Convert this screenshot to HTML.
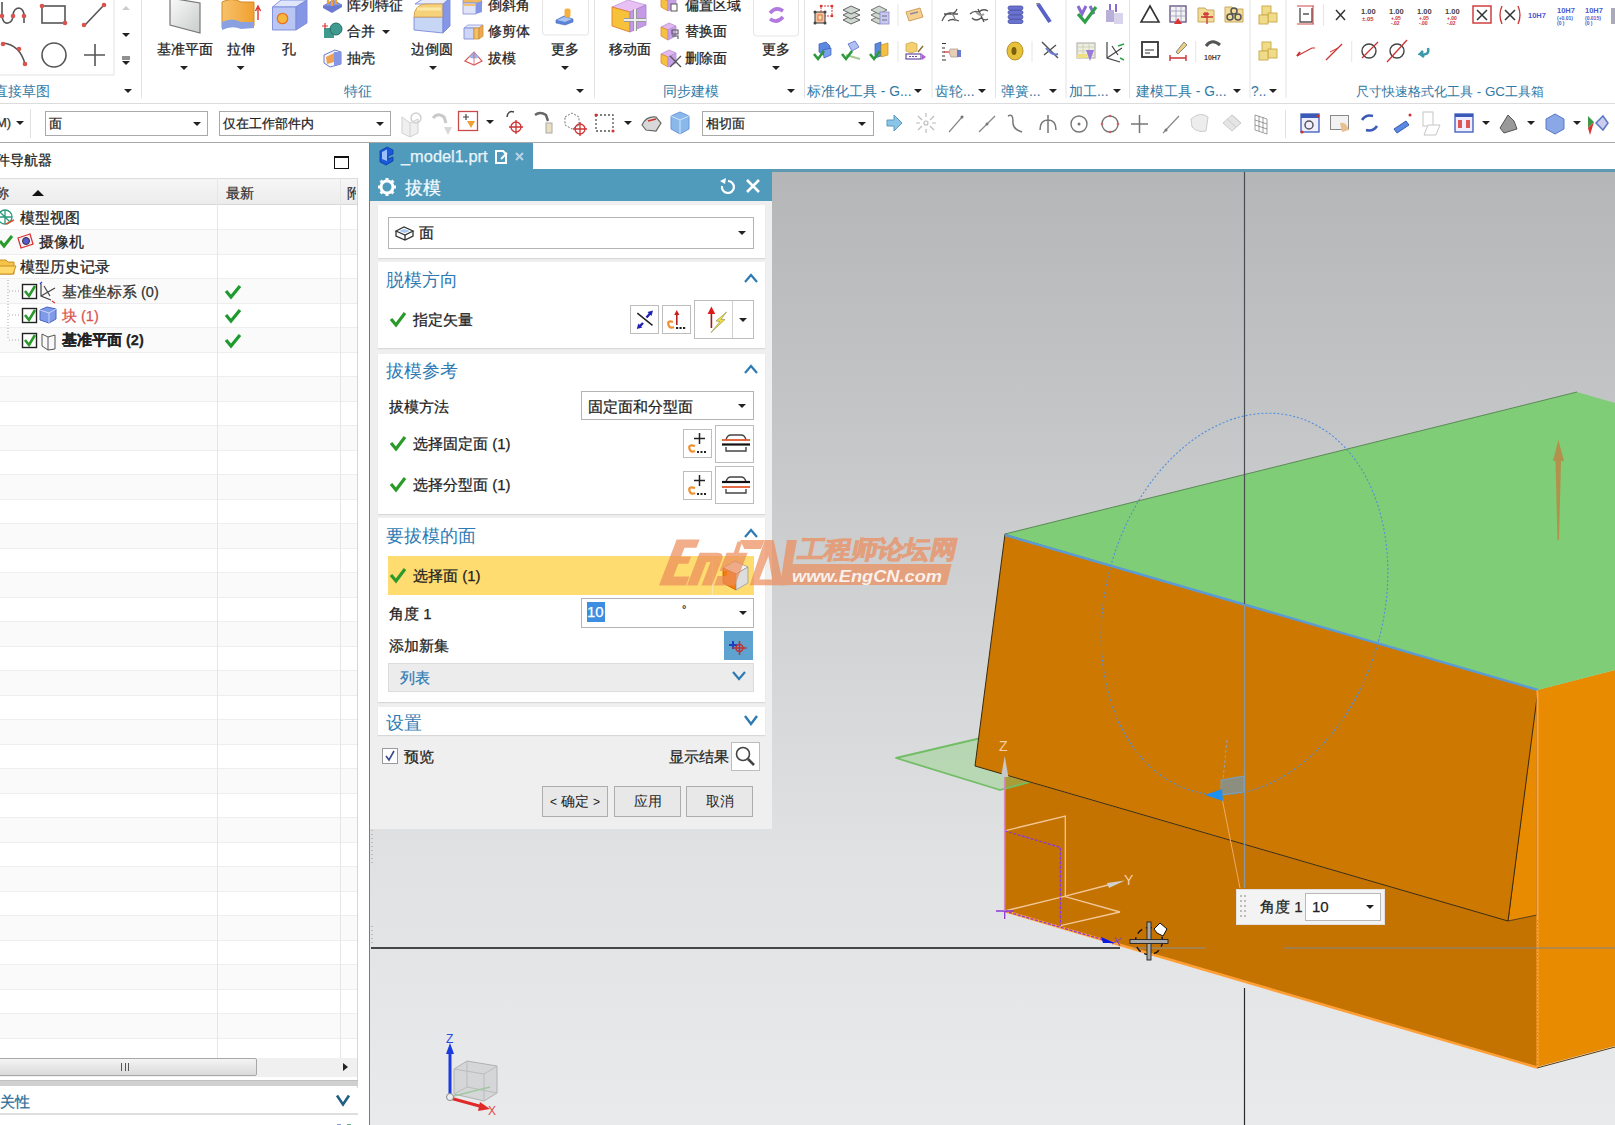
<!DOCTYPE html>
<html><head><meta charset="utf-8">
<style>
*{box-sizing:border-box}
html,body{margin:0;padding:0}
body{width:1615px;height:1125px;overflow:hidden;position:relative;background:#fff;font-family:"Liberation Sans",sans-serif;color:#222;font-size:13px}
.a{position:absolute}
.t{position:absolute;white-space:nowrap;line-height:1;-webkit-text-stroke:0.25px currentColor}
.lbl{position:absolute;white-space:nowrap;line-height:1;color:#2f79a6;font-size:13.8px}
.vsep{position:absolute;width:1px;background:#e3e3e3}
.dd{position:absolute;background:#fff;border:1px solid #a9a9a9}
.tri{position:absolute;width:0;height:0;border-left:4px solid transparent;border-right:4px solid transparent;border-top:4px solid #222}
.sec{position:absolute;left:378px;width:387px;background:#fff;box-shadow:0 1px 1px #d8d8d8}
.sh{position:absolute;left:9px;color:#2e7bb4;font-size:18px;line-height:1;white-space:nowrap}
.chev{position:absolute}
.btn{position:absolute;background:#e8e8e8;border:1px solid #adadad;font-size:14px;line-height:28px;text-align:center;color:#222}
.nrow{position:absolute;left:0;width:357px;height:25px;border-bottom:1px solid #ececec}
.ck{position:absolute}
</style></head>
<body>

<!-- ================= VIEWPORT ================= -->
<svg class="a" style="left:0;top:0" width="1615" height="1125" viewBox="0 0 1615 1125">
  <defs>
    <linearGradient id="vg" x1="0" y1="0" x2="0" y2="1">
      <stop offset="0" stop-color="#b4b6b8"/>
      <stop offset="0.24" stop-color="#c3c4c5"/>
      <stop offset="0.46" stop-color="#d0d2d3"/>
      <stop offset="0.71" stop-color="#e0e1e2"/>
      <stop offset="0.93" stop-color="#e7e8ea"/>
      <stop offset="1" stop-color="#e9eaec"/>
    </linearGradient>
  </defs>
  <rect x="370" y="172" width="1245" height="953" fill="url(#vg)"/>
  <!-- datum plane -->
  <!-- lower front face -->
  <polygon points="1004.5,775 1508,921 1537,915 1537,1067 1004.5,910.5" fill="#c47200"/>
  <polygon points="896,758 981,738 1030,782 1000,790" fill="#8fd080" fill-opacity="0.45" stroke="#72bd66" stroke-width="1.8" stroke-linejoin="round"/>
  <!-- right face -->
  <polygon points="1537,690 1615,670 1615,1046 1537,1067" fill="#e88b00"/>
  <polygon points="1537,690 1508,921 1537,915" fill="#e88b00" stroke="#3a2a10" stroke-width="0.8"/>
  <!-- drafted face -->
  <polygon points="1005,534 1538,690 1508,921 975,766" fill="#cd7800" stroke="#3a2a10" stroke-width="1"/>
  <!-- green top -->
  <polygon points="1005,534 1577,392 1615,403 1615,670 1538,690" fill="#7fcd76"/>
  <line x1="1005" y1="534" x2="1577" y2="392" stroke="#5a8a55" stroke-width="1"/>
  <line x1="1005" y1="535" x2="1538" y2="690" stroke="#5b9bd5" stroke-width="2.5"/>
  <line x1="1537.5" y1="690" x2="1537.5" y2="1067" stroke="#ffa53e" stroke-width="2"/><line x1="1537.5" y1="920" x2="1537.5" y2="1067" stroke="#c87a20" stroke-width="0.8" stroke-dasharray="1.5,2"/>
  <line x1="1004.5" y1="911" x2="1537" y2="1067.5" stroke="#ff9f35" stroke-width="2.6"/>
  <line x1="1537" y1="1068" x2="1615" y2="1047" stroke="#5a3a10" stroke-width="1"/>
  <!-- horizontal line -->
  <line x1="371" y1="948" x2="1120" y2="948" stroke="#111" stroke-width="1.6"/>
  <line x1="1134" y1="948" x2="1206" y2="948" stroke="#8a8f95" stroke-width="1.2"/>
  <line x1="1283" y1="948" x2="1615" y2="948" stroke="#7f858c" stroke-width="1.2"/>
  <!-- vertical line -->
  <line x1="1244.5" y1="172" x2="1244.5" y2="604" stroke="#4a4d50" stroke-width="1.2"/><line x1="1244.5" y1="604" x2="1244.5" y2="888" stroke="#8a96a0" stroke-width="1.3"/>
  <line x1="1244.5" y1="988" x2="1244.5" y2="1125" stroke="#2a2a2a" stroke-width="1.2"/>
  <!-- dotted ellipse -->
  <ellipse cx="1244.5" cy="604" rx="139" ry="194" transform="rotate(15 1244.5 604)" fill="none" stroke="#4f8fe0" stroke-width="1.1" stroke-dasharray="2,2"/>
  <!-- top face arrow -->
  <path d="M1558.3,440 L1553,461 L1555.5,461 L1557.5,540 L1559,540 L1561,461 L1564,461 Z" fill="#b1914c"/>
  <!-- handle on ellipse bottom -->
  <path d="M1227,740 L1222,790" stroke="#9aa0b0" stroke-width="1" stroke-dasharray="3,2"/>
  <path d="M1222,798 L1240,888" stroke="#f0b070" stroke-width="0.9"/>
  <path d="M1221,780 L1244,776 L1244,792 L1221,795 Z" fill="#8c8f80" stroke="#6aa8e0" stroke-width="0.8"/>
  <path d="M1205,795 L1222,789 L1223,801 Z" fill="#1e90f0"/>
  <!-- WCS -->
  <g fill="none" stroke="#f2c898" stroke-width="1.3">
    <path d="M1004.7,911 L1064.4,896.3 L1120,912 L1060.4,925.7"/>
    <path d="M1004.7,830.8 L1065.3,816 L1065.3,896.3"/>
    <path d="M1064.4,896.3 L1108,885"/>
  </g>
  <g fill="none" stroke="#8a3ad8" stroke-width="1.3">
    <path d="M1004.7,830.8 L1060.4,847.4 L1060.4,925.7" stroke-dasharray="3,1.5"/>
    <path d="M1004.7,911 L1104,940" stroke-dasharray="3,1.5"/>
    <path d="M996,911 H1014 M1004.7,903 V919"/>
  </g>
  <path d="M1004.7,911 V778" stroke="#d88ac0" stroke-width="1.6"/>
  <path d="M1004.7,756 L1001,777 L1008.4,777 Z" fill="#c8c8c8"/>
  <path d="M1125,880.5 L1107,883 L1109,888 Z" fill="#d0d0d0"/>
  <path d="M1101,937 L1115,943 L1103,943 Z" fill="#0a18e0"/>
  <g font-family="Liberation Sans" font-size="14" fill="#f5d0a8"><text x="999" y="751">Z</text><text x="1124" y="885">Y</text></g>
  <path d="M1112,944 L1122,938 M1115,937 L1120,946" stroke="#7a40d0" stroke-width="1"/>
  <!-- cursor -->
  <circle cx="1149" cy="941" r="13.5" fill="none" stroke="#111" stroke-width="1.4" stroke-dasharray="6,4"/>
  <rect x="1147" y="922" width="4" height="38" fill="#a8a8a8" stroke="#222" stroke-width="0.9"/>
  <rect x="1130" y="939.5" width="38" height="4" fill="#a8a8a8" stroke="#222" stroke-width="0.9"/>
  <path d="M1154,929 L1160,923 L1167,929 L1163,936 L1157,933 Z" fill="#fff" stroke="#111" stroke-width="1"/>
  <!-- bottom-left triad -->
  <path d="M454,1069 L467,1061 L497,1066 L497,1093 L484,1101 L454,1094 Z" fill="#c8caca" fill-opacity="0.6" stroke="#b0b2b2" stroke-width="1"/>
  <path d="M454,1069 L484,1074 L497,1066 M484,1074 V1101 M467,1061 V1087 L454,1094 M467,1087 L497,1093" fill="none" stroke="#b8baba" stroke-width="0.9"/>
  <path d="M450,1097 V1049" stroke="#1a3ae0" stroke-width="3"/><path d="M450,1043 L446,1054 L454,1054 Z" fill="#1a3ae0"/>
  <path d="M450,1098 L483,1107" stroke="#e02a2a" stroke-width="3"/><path d="M490,1109 L480,1102 L478,1111 Z" fill="#e02a2a"/>
  <path d="M450,1097 L490,1087" stroke="#a0c8a0" stroke-width="1.5"/>
  <circle cx="450" cy="1097" r="3.5" fill="#eee" stroke="#888"/>
  <g font-family="Liberation Sans" font-size="12"><text x="446" y="1043" fill="#2a4ae0">Z</text><text x="488" y="1115" fill="#e04a4a">X</text></g>
  <!-- viewport left edge handle -->
  <path d="M372,826 V866 M372,926 V946" stroke="#999" stroke-dasharray="1,3"/>

</svg>

<!-- ================= RIBBON ================= -->
<!-- group 1 直接草图 -->
<svg class="a" style="left:0;top:0" width="141" height="100">
  <g fill="none" stroke="#555" stroke-width="1.6">
    <path d="M2,2 V16 Q3,24 8,23 Q13,22 13,15 Q14,8 19,8 Q24,9 24,16 V23"/>
    <rect x="42" y="6" width="23" height="17"/>
    <line x1="85" y1="25" x2="104" y2="5"/>
    <path d="M3,43 Q20,45 25,64"/>
    <circle cx="54" cy="55" r="12"/>
    <path d="M84,55 H105 M95,44 V66"/>
  </g>
  <g fill="#d9534f">
    <circle cx="2" cy="16" r="2.3"/><circle cx="13" cy="16" r="2.3"/><circle cx="24" cy="16" r="2.3"/>
    <circle cx="42" cy="6" r="2.3"/><circle cx="65" cy="23" r="2.3"/>
    <circle cx="104" cy="5" r="2.3"/><circle cx="84" cy="25" r="2.3"/>
    <circle cx="3" cy="44" r="2.3"/><circle cx="19" cy="49" r="2.3"/><circle cx="25" cy="64" r="2.3"/>
  </g>
  <path d="M0,75 H114 V0" fill="none" stroke="#e2e2e2" stroke-width="1"/>
  <path d="M122,10 L126,6 L130,10 Z" fill="#ccc"/>
  <path d="M122,33 L130,33 L126,37 Z" fill="#222"/>
  <path d="M122,57 H130 M122,59 H130" stroke="#222" stroke-width="1"/>
  <path d="M122,61 L130,61 L126,65 Z" fill="#222"/>
  <path d="M124,89 L132,89 L128,93 Z" fill="#222"/>
</svg>
<div class="lbl" style="left:-6px;top:85px">直接草图</div>
<div class="vsep" style="left:141px;top:0;height:98px"></div>

<!-- group 2 特征 -->
<svg class="a" style="left:141px;top:0" width="453" height="100">
  <!-- datum plane -->
  <defs>
    <linearGradient id="gp" x1="0" y1="0" x2="1" y2="1"><stop offset="0" stop-color="#fafafa"/><stop offset="1" stop-color="#c9cccc"/></linearGradient>
    <linearGradient id="go" x1="0" y1="0" x2="1" y2="0"><stop offset="0" stop-color="#f7c26a"/><stop offset="1" stop-color="#f0a030"/></linearGradient>
    <linearGradient id="gb" x1="0" y1="0" x2="1" y2="1"><stop offset="0" stop-color="#c8d4f8"/><stop offset="1" stop-color="#7f95e6"/></linearGradient>
  </defs>
  <path d="M29,-2 L59,3 L59,33 L29,25 Z" fill="url(#gp)" stroke="#777" stroke-width="1.2"/>
  <!-- extrude -->
  <path d="M81,2 Q91,-3 100,2 L113,2 L113,26 L100,26 Q91,22 81,28 Z" fill="url(#go)" stroke="#d08a2a" stroke-width="1"/>
  <path d="M81,22 Q91,17 100,22 L113,22 L113,28 L100,29 Q91,25 81,30 Z" fill="#8aa0e0"/>
  <path d="M117,20 V8 M114.5,11 L117,6 L119.5,11" stroke="#d33" stroke-width="1.4" fill="none"/>
  <!-- hole -->
  <path d="M131.5,7 L140,0 L166,0 L155,7 Z" fill="#dfe6fb" stroke="#7a8ad8" stroke-width="0.9"/>
  <path d="M131.5,7 H155 V30 H131.5 Z" fill="#b9c6f4" stroke="#7a8ad8" stroke-width="0.9"/>
  <path d="M155,7 L166,0 V23 L155,30 Z" fill="#8596e6" stroke="#7a8ad8" stroke-width="0.9"/>
  <circle cx="141.5" cy="18.5" r="5.2" fill="#f6b83c" stroke="#e8702a" stroke-width="1.3"/>
  <!-- small icons -->
  <path d="M182,6 L192,0 L201,5 L191,11 Z" fill="#8596e6" stroke="#6a7ad0" stroke-width="0.8"/><path d="M182,6 V8 L191,13 L201,7 V5" fill="#6a7ad0"/><path d="M187,4 V-3 M191,6 V-2 M195,4 V-4" stroke="#f0a030" stroke-width="2.2"/>
  <rect x="183" y="28" width="10" height="10" fill="#3e9a8e"/><circle cx="195" cy="29" r="6" fill="#3e9a8e" stroke="#2a6b63"/><path d="M181,26 H187 M184,23 V29" stroke="#d33" stroke-width="1.2"/>
  <path d="M183,55 L194,50 L200,52 L200,64 L189,67 L183,63 Z" fill="#f6f6fa" stroke="#6a7ad0" stroke-width="1"/><path d="M185,57 L193,53 L193,62 L186,64 Z" fill="#f0a050"/><path d="M193,52 L200,52 V64 L193,66 Z" fill="#8596e6"/>
  <path d="M95.6,66 L103.6,66 L99.6,70 Z M39,66 L47,66 L43,70 Z" fill="#222"/>
  <path d="M241,30 L249,30 L245,34 Z" fill="#222"/>
  <!-- edge blend -->
  <path d="M274,4 L283,-2 L309,-2 L303,4 Z" fill="#e8ecfa" stroke="#7a8ad8" stroke-width="0.9"/>
  <path d="M273,17 V30 L302,33 V17 Z" fill="#c8d6f6" stroke="#7a8ad8" stroke-width="0.9"/>
  <path d="M273,17 Q273,4 286,4 H302 Q302,13 302,17 Z" fill="#f5d27a" stroke="#d8a050" stroke-width="0.9"/>
  <path d="M276,9 H300" stroke="#fbe9a8" stroke-width="3"/>
  <path d="M302,4 L309,-2 V26 L302,33 Z" fill="#8596e6" stroke="#7a8ad8" stroke-width="0.9"/>
  <path d="M288,66 L296,66 L292,70 Z" fill="#222"/>
  <!-- small icons 2 -->
  <path d="M322,-2 L340,-2 L341,3 L322,3 Z" fill="#f0b860" stroke="#8a96d8" stroke-width="0.8"/><path d="M322,3 H335 V14 H322 Z" fill="#dfe4f8" stroke="#8a96d8" stroke-width="0.9"/><path d="M335,3 L341,1 V12 L335,14 Z" fill="#8596e6"/><path d="M323,5 H334" stroke="#f0c070" stroke-width="2"/>
  <path d="M323,28 L327,25 H342 L338,28 Z" fill="#e8ecfa" stroke="#8a96d8" stroke-width="0.8"/><path d="M323,28 H333 V39 H323 Z" fill="#cdd6f6" stroke="#8a96d8" stroke-width="1"/><path d="M333,28 H338 V39 H333 Z" fill="#f5c060" stroke="#c89040" stroke-width="0.8"/><path d="M338,28 L342,25 V36 L338,39 Z" fill="#f0a850" stroke="#c89040" stroke-width="0.8"/>
  <path d="M324,61 L333,52 L341,61 L333,65 Z" fill="#fff" stroke="#d85a5a" stroke-width="1.2"/><path d="M328,57 L333,52 L338,57 Q333,60 328,57 Z" fill="#9ab4ee"/><path d="M333,53 V64" stroke="#d85a5a" stroke-width="0.8"/>
  <!-- more box -->
  <rect x="401.5" y="-2" width="46" height="37" rx="3" fill="#fff" stroke="#e5e5e5"/>
  <path d="M415,20 L423,16 L432,19 L432,22 L424,25 L415,23 Z" fill="#5a84d8" stroke="#4a6ac0" stroke-width="0.6"/><path d="M416,20 L423,17 L431,19 L424,22 Z" fill="#a8c4f0"/><rect x="423.5" y="8.5" width="6" height="9" rx="2" fill="#f5b040"/>
  <path d="M420,66 L428,66 L424,70 Z" fill="#222"/>
  <path d="M435,89 L443,89 L439,93 Z" fill="#222"/>
</svg>
<div class="t" style="left:157px;top:42px;font-size:14px">基准平面</div>
<div class="t" style="left:227px;top:42px;font-size:14px">拉伸</div>
<div class="t" style="left:282px;top:42px;font-size:14px">孔</div>
<div class="t" style="left:347px;top:-2px;font-size:14px">阵列特征</div>
<div class="t" style="left:347px;top:24px;font-size:14px">合并</div>
<div class="t" style="left:347px;top:51px;font-size:14px">抽壳</div>
<div class="t" style="left:411px;top:42px;font-size:14px">边倒圆</div>
<div class="t" style="left:488px;top:-2px;font-size:14px">倒斜角</div>
<div class="t" style="left:488px;top:24px;font-size:14px">修剪体</div>
<div class="t" style="left:488px;top:51px;font-size:14px">拔模</div>
<div class="t" style="left:551px;top:42px;font-size:14px">更多</div>
<div class="lbl" style="left:344px;top:85px">特征</div>
<div class="vsep" style="left:594px;top:0;height:98px"></div>

<!-- group 3 同步建模 -->
<svg class="a" style="left:594px;top:0" width="210" height="100">
  <path d="M18,7 L34,0 L52,5 L36,12 Z" fill="#e8c0f4" stroke="#c098e0" stroke-width="0.8"/>
  <path d="M18,7 L36,12 V32 L18,26 Z" fill="#f6c23a" stroke="#e0802a" stroke-width="0.9"/>
  <path d="M36,12 L52,5 V25 L36,32 Z" fill="#c49ae6" stroke="#a880d0" stroke-width="0.8"/>
  <path d="M30,20 H52 M41,9 V31" stroke="#999" stroke-width="4"/><path d="M30,20 H52 M41,9 V31" stroke="#eee" stroke-width="2"/>
  <path d="M67,-2 L75,-6 L82,-3 L74,1 Z" fill="#e2b8f0" stroke="#b890d8" stroke-width="0.8"/><path d="M67,-2 L74,1 V11 L67,7 Z" fill="#f6c040" stroke="#e08a30" stroke-width="0.8"/><path d="M74,1 L82,-3 V7 L74,11 Z" fill="#c8a0e8" stroke="#b890d8" stroke-width="0.8"/><rect x="77" y="4" width="6" height="7" fill="#fff" stroke="#555" stroke-width="1"/>
  <path d="M67,27 L75,23 L82,26 L74,30 Z" fill="#e2b8f0" stroke="#b890d8" stroke-width="0.8"/><path d="M67,27 L74,30 V40 L67,36 Z" fill="#f6c040" stroke="#e08a30" stroke-width="0.8"/><path d="M74,30 L82,26 V36 L74,40 Z" fill="#c8a0e8" stroke="#b890d8" stroke-width="0.8"/><path d="M78,30 h6 v4 h-6 z M78,36 h6 v3" fill="none" stroke="#555" stroke-width="1.1"/>
  <path d="M67,54 L75,50 L82,53 L74,57 Z" fill="#e2b8f0" stroke="#b890d8" stroke-width="0.8"/><path d="M67,54 L74,57 V67 L67,63 Z" fill="#f6c040" stroke="#e08a30" stroke-width="0.8"/><path d="M74,57 L82,53 V63 L74,67 Z" fill="#c8a0e8" stroke="#b890d8" stroke-width="0.8"/><path d="M76,56 L87,67 M87,56 L76,67" stroke="#555" stroke-width="1.3"/>
  <rect x="159.5" y="-2" width="45" height="38" rx="3" fill="#fff" stroke="#e5e5e5"/>
  <path d="M176,13 Q182,6 189,11 M189,17 Q183,24 176,19" stroke="#b07ae0" stroke-width="3.5" fill="none"/>
  <path d="M178,66 L186,66 L182,70 Z" fill="#222"/>
  <path d="M193,89 L201,89 L197,93 Z" fill="#222"/>
  <path d="M-10,89 L-2,89 L-6,93 Z" fill="#222"/>
</svg>
<div class="t" style="left:609px;top:42px;font-size:14px">移动面</div>
<div class="t" style="left:685px;top:-2px;font-size:14px">偏置区域</div>
<div class="t" style="left:685px;top:24px;font-size:14px">替换面</div>
<div class="t" style="left:685px;top:51px;font-size:14px">删除面</div>
<div class="t" style="left:762px;top:42px;font-size:14px">更多</div>
<div class="lbl" style="left:663px;top:85px">同步建模</div>
<div class="vsep" style="left:804px;top:0;height:98px"></div>
<!-- groups 4.. -->
<svg class="a" style="left:0;top:0" width="1615" height="100">
  <!-- 标准化工具 -->
  <rect x="821" y="6" width="11" height="10" fill="#fff" stroke="#d33" stroke-width="1" stroke-dasharray="2,1"/><g fill="#d33"><circle cx="821" cy="6" r="1.3"/><circle cx="832" cy="6" r="1.3"/><circle cx="832" cy="16" r="1.3"/></g>
  <rect x="815" y="12" width="10" height="11" fill="#f4c0a0" stroke="#555" stroke-width="1.2"/><rect x="818" y="15" width="4" height="5" fill="#f8e0b0" stroke="#d06030" stroke-width="0.8"/><g fill="#444"><circle cx="815" cy="12" r="1.5"/><circle cx="825" cy="23" r="1.5"/><circle cx="815" cy="23" r="1.5"/><circle cx="825" cy="12" r="1.5"/></g>
  <g fill="#cfd8d0" stroke="#555" stroke-width="0.9"><path d="M843,20 L851,16 L860,20 L851,24 Z"/><path d="M843,15 L851,11 L860,15 L851,19 Z"/><path d="M843,10 L851,6 L860,10 L851,14 Z"/></g>
  <g fill="#cfd8d0" stroke="#666" stroke-width="0.9"><path d="M871,20 L879,16 L887,20 L879,24 Z"/><path d="M871,15 L879,11 L887,15 L879,19 Z"/><path d="M871,10 L879,6 L887,10 L879,14 Z"/></g>
  <rect x="880" y="12" width="9" height="12" fill="#c8c8f0" stroke="#8a8ac8" stroke-width="0.8"/><path d="M882,16 H887 M882,20 H887" stroke="#555" stroke-width="0.8"/>
  <line x1="898" y1="4" x2="898" y2="26" stroke="#e5e5e5"/>
  <path d="M906,12 L920,8 L923,17 L909,21 Z" fill="#f5d090" stroke="#d0a060" stroke-width="1"/><path d="M910,14 L918,12" stroke="#8a8aa0" stroke-width="1.5"/>
  <path d="M819,44 L826,42 L830,46 V52 L823,55 L819,52 Z" fill="#5a8ae0" stroke="#3a5ab0" stroke-width="0.7"/><path d="M823,50 L831,48 V55 L824,58 Z" fill="#7aa0f0" stroke="#3a5ab0" stroke-width="0.7"/>
  <path d="M814,54 L818,59 L824,51" stroke="#2a9a3a" stroke-width="2.6" fill="none"/>
  <path d="M848,44 L855,41 L859,47 L852,51 Z" fill="#b0c0f0" stroke="#5a6ad0" stroke-width="0.8"/><path d="M846,55 L860,59" stroke="#a8c890" stroke-width="2"/>
  <path d="M842,54 L846,59 L852,51" stroke="#2a9a3a" stroke-width="2.6" fill="none"/>
  <path d="M875,44 L881,42 V56 L875,58 Z" fill="#5a8ae0" stroke="#3a5ab0" stroke-width="0.7"/><path d="M881,45 L888,43 V55 L881,57 Z" fill="#f5c040" stroke="#c09020" stroke-width="0.7"/>
  <path d="M870,54 L874,59 L880,51" stroke="#2a9a3a" stroke-width="2.6" fill="none"/>
  <line x1="898" y1="41" x2="898" y2="62" stroke="#e5e5e5"/>
  <path d="M906,44 L912,42 L917,44 V51 L911,53 L906,51 Z" fill="#f5d070" stroke="#c0a040" stroke-width="0.7"/><path d="M918,52 L923,46" stroke="#8a6a30" stroke-width="1.4"/>
  <rect x="906" y="54" width="15" height="5" fill="#fff" stroke="#6a4aa0" stroke-width="1.2"/><path d="M909,56.5 H918" stroke="#6a4aa0" stroke-width="1.2" stroke-dasharray="2,1"/><path d="M922,54 L926,57 L922,60 Z" fill="#b060d0"/>
  <path d="M914,89 L922,89 L918,93 Z" fill="#222"/>
  <line x1="932" y1="0" x2="932" y2="98" stroke="#e3e3e3"/>
  <!-- 齿轮 -->
  <path d="M942,21 Q946,12 951,13 Q955,14 957,9 M944,14 H958 M948,21 Q952,18 959,21" stroke="#555" stroke-width="1.3" fill="none"/><path d="M951,13 Q955,16 955,21" stroke="#888" stroke-width="1.5" fill="none"/>
  <path d="M970,14 Q974,10 979,12 Q983,8 988,11 M972,18 Q976,22 981,18 Q985,21 988,19 M978,9 L984,22" stroke="#555" stroke-width="1.3" fill="none"/><path d="M976,12 Q980,17 984,14" stroke="#999" stroke-width="2" fill="none"/>
  <path d="M942,43.5 H946 M942,48 H945 M942,52 H945 M942,56 H945 M942,60 H946" stroke="#333" stroke-width="1.2"/><path d="M944,52 H950" stroke="#c33" stroke-width="1.2"/><path d="M950,49 H958 V57 H951 Q948,53 950,49 Z" fill="#e8d0b8" stroke="#9a8a7a" stroke-width="0.6"/><rect x="957" y="50" width="4" height="7" fill="#6a7ad0"/>
  <path d="M978,89 L986,89 L982,93 Z" fill="#222"/>
  <line x1="995.5" y1="0" x2="995.5" y2="98" stroke="#e3e3e3"/>
  <!-- 弹簧 -->
  <g fill="#6a72d0" stroke="#4a52a8" stroke-width="0.8"><rect x="1008" y="6" width="15" height="4" rx="2"/><rect x="1008" y="10.5" width="15" height="4" rx="2"/><rect x="1008" y="15" width="15" height="4" rx="2"/><rect x="1008" y="19.5" width="15" height="4" rx="2"/></g>
  <path d="M1038,4 L1050,22" stroke="#5a62c8" stroke-width="4"/><path d="M1036,4 Q1038,2 1040,5" stroke="#777" fill="none"/>
  <ellipse cx="1015" cy="51" rx="8" ry="9" fill="#e6c23a" stroke="#b89020"/><ellipse cx="1014" cy="51" rx="2.5" ry="4" fill="#7a6010"/>
  <line x1="1032" y1="41" x2="1032" y2="62" stroke="#e5e5e5"/>
  <path d="M1042,42 L1058,58 M1044,55 L1056,45" stroke="#555" stroke-width="1.5"/><path d="M1046,48 Q1052,56 1058,54" stroke="#6a7ad0" stroke-width="2" fill="none"/>
  <path d="M1049,89 L1057,89 L1053,93 Z" fill="#222"/>
  <line x1="1066" y1="0" x2="1066" y2="98" stroke="#e3e3e3"/>
  <!-- 加工 -->
  <path d="M1078,6 L1082,14 L1086,6 M1090,6 L1094,14" stroke="#8a6ad0" stroke-width="3" fill="none"/><path d="M1078,14 L1085,22 L1096,7" stroke="#2ea04a" stroke-width="3.2" fill="none"/>
  <rect x="1106" y="10" width="8" height="12" fill="#b8b0d8"/><rect x="1114" y="13" width="9" height="11" fill="#d8d4ec"/><path d="M1110,4 V10 M1116,4 V12" stroke="#8a6ad0" stroke-width="2"/>
  <rect x="1077" y="43" width="18" height="15" fill="#eeeee0" stroke="#aaa"/><path d="M1077,47 H1095 M1077,51 H1095 M1077,55 H1095 M1083,43 V58 M1089,43 V58" stroke="#c8c8b0" stroke-width="0.7"/><rect x="1077" y="54" width="10" height="4" fill="#f0e080"/><path d="M1086,50 L1094,50 L1090,61 Z" fill="#9a7ad8"/>
  <path d="M1107,42 V58 L1120,62 M1107,58 L1122,48 M1112,46 L1118,55" stroke="#444" stroke-width="1.2" fill="none"/><path d="M1118,46 L1124,44 M1120,58 L1124,60" stroke="#2ea04a" stroke-width="1.4"/>
  <path d="M1113,89 L1121,89 L1117,93 Z" fill="#222"/>
  <line x1="1129.5" y1="0" x2="1129.5" y2="98" stroke="#e3e3e3"/>
  <!-- 建模工具 -->
  <path d="M1150,6 L1159,22 L1141,22 Z" fill="none" stroke="#333" stroke-width="1.6"/>
  <rect x="1170" y="6" width="16" height="16" fill="#f3f3f3" stroke="#6a5a8a" stroke-width="1.4"/><path d="M1170,11 H1186 M1170,16 H1186 M1176,6 V22 M1181,6 V22" stroke="#9a9aba" stroke-width="0.8"/><path d="M1178,18 L1182,24 L1174,24 Z" fill="#d33"/>
  <path d="M1198,8 H1205 L1207,10 H1214 V22 H1198 Z" fill="#f2dc98" stroke="#c8a860"/><path d="M1201,17 H1213 M1207,12 V24 M1203,14 H1209 M1205,12 V18" stroke="#c33" stroke-width="1.3"/>
  <path d="M1225,7 H1232 L1234,9 H1243 V22 H1225 Z" fill="#f2dc98" stroke="#c8a860"/><circle cx="1230" cy="17" r="3" fill="none" stroke="#555" stroke-width="1.5"/><circle cx="1238" cy="17" r="3" fill="none" stroke="#555" stroke-width="1.5"/><circle cx="1234" cy="11" r="3" fill="none" stroke="#555" stroke-width="1.5"/>
  <rect x="1142" y="42" width="16" height="15" fill="#fff" stroke="#333" stroke-width="1.8"/><path d="M1145,50 H1154 M1145,53 H1150" stroke="#333"/>
  <path d="M1170,58 H1186 M1170,55 V61 M1186,55 V61" stroke="#c33" stroke-width="1.4"/><path d="M1176,52 L1184,42 L1187,45 L1178,54 Z" fill="#e8d080" stroke="#888"/>
  <line x1="1195.7" y1="41" x2="1195.7" y2="62" stroke="#e5e5e5"/>
  <path d="M1206,46 Q1212,38 1220,45" stroke="#555" stroke-width="3" fill="none"/><text x="1204" y="60" font-size="7" font-weight="bold" fill="#444" font-family="Liberation Sans">10H7</text>
  <path d="M1233,89 L1241,89 L1237,93 Z" fill="#222"/>
  <line x1="1250" y1="0" x2="1250" y2="98" stroke="#e3e3e3"/>
  <!-- ?.. -->
  <g fill="#f0dc88" stroke="#c8a848" stroke-width="0.9"><rect x="1262" y="6" width="9" height="9"/><rect x="1268" y="13" width="9" height="9"/><rect x="1259" y="15" width="9" height="9"/></g>
  <g fill="#f0dc88" stroke="#c8a848" stroke-width="0.9"><rect x="1262" y="42" width="9" height="9"/><rect x="1268" y="49" width="9" height="9"/><rect x="1259" y="51" width="9" height="9"/></g>
  <path d="M1269,89 L1277,89 L1273,93 Z" fill="#222"/>
  <line x1="1286" y1="0" x2="1286" y2="98" stroke="#e3e3e3"/>
  <!-- 尺寸快速格式化 -->
  <path d="M1300,8 V22 H1312 V8 M1303,14 H1309" stroke="#555" stroke-width="1.4" fill="none"/><path d="M1313,6 V24 M1297,6 H1314 M1297,24 H1314" stroke="#c33" stroke-width="0.9"/>
  <line x1="1323.4" y1="4" x2="1323.4" y2="26" stroke="#e5e5e5"/>
  <path d="M1336,10 L1345,20 M1345,10 L1336,20" stroke="#333" stroke-width="1.5"/>
  <g font-family="Liberation Sans" font-size="7.5" font-weight="bold" fill="#444">
    <text x="1361" y="14">1.00</text><text x="1362" y="21" font-size="6" fill="#c33">±.05</text>
    <text x="1389" y="14">1.00</text><text x="1391" y="20" font-size="5" fill="#c33">+.05</text><text x="1391" y="25" font-size="5" fill="#c33">-.02</text>
    <text x="1417" y="14">1.00</text><text x="1419" y="20" font-size="5" fill="#c33">+.05</text><text x="1419" y="25" font-size="5" fill="#c33">-.00</text>
    <text x="1445" y="14">1.00</text><text x="1447" y="20" font-size="5" fill="#c33">+.00</text><text x="1447" y="25" font-size="5" fill="#c33">-.02</text>
  </g>
  <rect x="1473" y="6" width="18" height="17" fill="none" stroke="#c33" stroke-width="1.4"/><path d="M1477,10 L1487,20 M1487,10 L1477,20" stroke="#333" stroke-width="1.5"/>
  <path d="M1502,6 Q1498,15 1502,24 M1518,6 Q1522,15 1518,24" stroke="#c33" stroke-width="1.3" fill="none"/><path d="M1505,10 L1515,20 M1515,10 L1505,20" stroke="#333" stroke-width="1.5"/>
  <g font-family="Liberation Sans" font-size="7.5" font-weight="bold" fill="#4a5ad0">
    <text x="1528" y="18">10H7</text>
    <text x="1557" y="13">10H7</text><text x="1557" y="20" font-size="5">(+0.01)</text><text x="1557" y="25" font-size="5">(0   )</text>
    <text x="1585" y="13">10H7</text><text x="1585" y="20" font-size="5">(0.015)</text><text x="1585" y="25" font-size="5">(0   )</text>
  </g>
  <rect x="1611" y="8" width="4" height="16" fill="#aab"/>
  <path d="M1297,56 L1312,48 H1315" stroke="#c33" stroke-width="1.2" fill="none"/><path d="M1297,56 L1300,52" stroke="#c33" stroke-width="2"/>
  <path d="M1326,60 L1342,44" stroke="#c33" stroke-width="1.2"/><path d="M1330,52 L1338,48" stroke="#c33" stroke-width="1"/>
  <line x1="1351.7" y1="41" x2="1351.7" y2="62" stroke="#e5e5e5"/>
  <circle cx="1369" cy="51" r="7" fill="none" stroke="#444" stroke-width="1.4"/><path d="M1362,58 L1378,42" stroke="#c33" stroke-width="1.3"/>
  <circle cx="1397" cy="51" r="7" fill="none" stroke="#444" stroke-width="1.4"/><path d="M1387,62 L1407,40" stroke="#c33" stroke-width="1.3"/>
  <path d="M1428,48 Q1430,56 1420,54 L1423,51 M1420,54 L1424,57" stroke="#3a9aa8" stroke-width="2.5" fill="none"/>
</svg>
<div class="lbl" style="left:807px;top:85px">标准化工具 - G...</div>
<div class="lbl" style="left:935px;top:85px">齿轮...</div>
<div class="lbl" style="left:1001px;top:85px">弹簧...</div>
<div class="lbl" style="left:1069px;top:85px">加工...</div>
<div class="lbl" style="left:1136px;top:85px">建模工具 - G...</div>
<div class="lbl" style="left:1251px;top:85px">?..</div>
<div class="lbl" style="left:1356px;top:85px;font-size:13.4px">尺寸快速格式化工具 - GC工具箱</div>


<div class="a" style="left:0;top:103px;width:1615px;height:1px;background:#dcdcdc"></div>
<div class="a" style="left:0;top:142px;width:1615px;height:1px;background:#a8a8a8"></div>


<!-- ================= SELECTION BAR ================= -->
<div class="t" style="left:-4px;top:116px;font-size:13px;color:#333">M)</div>
<div class="tri" style="left:16px;top:121px"></div>
<div class="a" style="left:30px;top:109px;width:1px;height:29px;background:#e0e0e0"></div>
<div class="dd" style="left:45px;top:111px;width:163px;height:25px"><div class="t" style="left:3px;top:5px;font-size:13px">面</div><div class="tri" style="left:147px;top:10px"></div></div>
<div class="dd" style="left:219px;top:111px;width:172px;height:25px"><div class="t" style="left:3px;top:5px;font-size:13px">仅在工作部件内</div><div class="tri" style="left:156px;top:10px"></div></div>
<div class="dd" style="left:702px;top:111px;width:172px;height:25px"><div class="t" style="left:3px;top:5px;font-size:13px">相切面</div><div class="tri" style="left:155px;top:10px"></div></div>
<svg class="a" style="left:0;top:103px" width="1615" height="40">
  <!-- icons -->
  <g opacity="0.45"><path d="M402,14 V30 L410,34 V20 Z M410,20 L418,16 V30 L410,34" fill="#ddd" stroke="#999"/><circle cx="416" cy="15" r="5" fill="none" stroke="#999" stroke-width="1.5"/></g>
  <g opacity="0.45"><path d="M433,15 Q438,9 444,14 L446,20" stroke="#888" stroke-width="3" fill="none"/><path d="M444,24 L452,24 L448,32 Z" fill="#aaa"/></g>
  <rect x="458.5" y="8.5" width="19" height="19" fill="#fff" stroke="#c84a4a" stroke-width="1.3"/><path d="M463,14 H469 M466,11 V17" stroke="#444" stroke-width="1.2"/><path d="M467,18 L475,18 L471,25 Z" fill="#f0a030"/>
  <path d="M486,17 L494,17 L490,21 Z" fill="#222"/>
  <path d="M507,14 Q508,7 514,9" stroke="#444" stroke-width="1.5" fill="none"/><circle cx="516" cy="24" r="5" fill="none" stroke="#c33" stroke-width="1.3"/><path d="M509,24 H523 M516,17 V31" stroke="#c33" stroke-width="1.3"/>
  <path d="M535,12 Q540,8 546,12 L548,18" stroke="#666" stroke-width="2.5" fill="none"/><rect x="546" y="20" width="6" height="10" fill="#e8e0c0" stroke="#aaa"/>
  <path d="M565,14 L572,10 L579,14 V22 L572,26 L565,22 Z" fill="none" stroke="#777" stroke-dasharray="2,1.5"/><circle cx="580" cy="26" r="5" fill="none" stroke="#c33" stroke-width="1.3"/><path d="M573,26 H587 M580,19 V33" stroke="#c33" stroke-width="1.3"/>
  <rect x="596" y="12" width="17" height="16" fill="none" stroke="#555" stroke-dasharray="2,2" stroke-width="1.3"/><circle cx="596" cy="12" r="1.5" fill="#c33"/><circle cx="613" cy="28" r="1.5" fill="#c33"/>
  <path d="M624,18 L632,18 L628,22 Z" fill="#222"/>
  <path d="M642,22 Q646,13 656,14 L661,20 L656,28 L646,27 Z" fill="#d8d8d8" stroke="#666" stroke-width="1.2"/><path d="M648,18 L656,16" stroke="#c33" stroke-width="1.5"/>
  <path d="M671,13 L680,9 L689,13 V26 L680,31 L671,26 Z" fill="#8ab8ea" stroke="#6a98d8"/><path d="M671,13 L680,17 L689,13 M680,17 V31" stroke="#cfe4fa" stroke-width="1" fill="none"/>
  <path d="M887,17 H894 V12 L902,20 L894,28 V23 H887 Z" fill="#8ac4e6" stroke="#5a9ac0"/>
  <g opacity="0.55" fill="none" stroke="#888" stroke-width="1.2">
    <path d="M918,13 L922,17 M934,13 L930,17 M918,27 L922,23 M934,27 L930,23"/><circle cx="926" cy="20" r="2"/><path d="M916,20 H920 M932,20 H936 M926,10 V14 M926,26 V30"/>
  </g>
  <path d="M949,29 L963,13" stroke="#888" stroke-width="1.2"/><circle cx="962" cy="14" r="1.5" fill="#777"/>
  <path d="M979,29 L995,13" stroke="#888" stroke-width="1.2"/><circle cx="987" cy="21" r="1.5" fill="#777"/>
  <path d="M1008,13 Q1013,10 1013,18 Q1012,26 1022,29" stroke="#777" stroke-width="1.5" fill="none"/>
  <path d="M1040,27 Q1040,17 1048,17 Q1056,17 1056,27 M1048,12 V30" stroke="#777" stroke-width="1.5" fill="none"/>
  <circle cx="1079" cy="21" r="8" fill="none" stroke="#777" stroke-width="1.4"/><circle cx="1079" cy="21" r="1.5" fill="#777"/>
  <circle cx="1110" cy="21" r="8" fill="none" stroke="#777" stroke-width="1.4"/><g fill="#c66"><circle cx="1102" cy="21" r="1.3"/><circle cx="1118" cy="21" r="1.3"/><circle cx="1110" cy="13" r="1.3"/><circle cx="1110" cy="29" r="1.3"/></g>
  <path d="M1131,21 H1148 M1139.5,12 V30" stroke="#777" stroke-width="1.5"/>
  <path d="M1163,30 L1179,13" stroke="#888" stroke-width="1.2"/><circle cx="1166" cy="27" r="1.5" fill="#777"/>
  <g opacity="0.5"><path d="M1191,16 Q1200,8 1208,14 L1206,28 Q1198,30 1192,24 Z" fill="#ddd" stroke="#999"/></g>
  <g opacity="0.5"><path d="M1223,20 L1232,12 L1241,20 L1232,28 Z" fill="#ccc" stroke="#999"/><path d="M1227,16 L1236,24 M1232,12 L1241,20" stroke="#999"/></g>
  <g opacity="0.7"><path d="M1255,12 L1267,16 V31 L1255,27 Z M1255,17 L1267,21 M1255,22 L1267,26 M1259,13 V28 M1263,14 V29" fill="none" stroke="#777"/></g>
  <line x1="1285.5" y1="7" x2="1285.5" y2="35" stroke="#e0e0e0"/>
  <rect x="1301" y="11" width="18" height="18" fill="#eef" stroke="#3a5ab8" stroke-width="1.3"/><rect x="1301" y="11" width="18" height="4" fill="#3a5ab8"/><circle cx="1309" cy="22" r="4" fill="none" stroke="#555" stroke-width="1.5"/><circle cx="1302" cy="29" r="1.6" fill="#c33"/><circle cx="1318" cy="13" r="1.6" fill="#c33"/>
  <rect x="1330.5" y="12.5" width="18" height="14" fill="#f2f2f2" stroke="#888"/><path d="M1340,20 Q1346,18 1349,27 L1342,29 Z" fill="#e8c090"/>
  <path d="M1362,17 Q1366,11 1373,13 M1377,23 Q1373,29 1366,27" stroke="#3a5ab8" stroke-width="2.6" fill="none"/>
  <path d="M1394,26 L1406,18 L1409,22 L1397,30 Z" fill="#5a8ae0" stroke="#3a5ab8"/><circle cx="1410" cy="12" r="1.5" fill="#c33"/>
  <g opacity="0.55"><rect x="1423" y="9" width="10" height="14" fill="#fff" stroke="#999"/><path d="M1428,22 L1440,22 L1436,32 L1424,32 Z" fill="#fff" stroke="#999"/></g>
  <rect x="1455" y="11" width="18" height="18" fill="#eef" stroke="#3a5ab8" stroke-width="1.3"/><rect x="1455" y="11" width="18" height="3" fill="#3a5ab8"/><rect x="1458" y="17" width="4" height="8" fill="#d55"/><rect x="1466" y="17" width="4" height="8" fill="#d55"/>
  <path d="M1482,18 L1490,18 L1486,22 Z" fill="#222"/>
  <path d="M1500,25 L1508,12 L1514,18 L1517,26 L1504,30 Z" fill="#999" stroke="#555"/>
  <path d="M1527,18 L1535,18 L1531,22 Z" fill="#222"/>
  <path d="M1546,16 L1555,11 L1564,16 V26 L1555,31 L1546,26 Z" fill="#8aa8e6" stroke="#5a78c8"/>
  <path d="M1573,18 L1581,18 L1577,22 Z" fill="#222"/>
  <path d="M1588,13 L1594,19 L1588,25 Z" fill="#3a9a4a"/><path d="M1588,25 L1594,19 L1590,32 Z" fill="#d33"/><path d="M1596,20 L1603,13 L1608,20 L1603,27 Z" fill="#cce" stroke="#5a78c8" stroke-width="1.5"/>
</svg>


<!-- ================= NAVIGATOR ================= -->
<div class="a" style="left:0;top:143px;width:358px;height:982px;background:#fff"></div>
<div class="t" style="left:-18px;top:153px;font-size:14px;color:#222">部件导航器</div>
<div class="a" style="left:334px;top:156px;width:15px;height:13px;border:1.6px solid #111;border-top-width:2.2px"></div>
<div class="a" style="left:0;top:178px;width:357px;height:27px;background:linear-gradient(#f6f6f6,#ececec);border-top:1px solid #dcdcdc;border-bottom:1px solid #d8d8d8"></div>
<div class="a" style="left:0;top:205.9px;width:357px;height:23.5px;background:#ffffff"></div>
<div class="a" style="left:0;top:229.4px;width:357px;height:1px;background:#eeeeee"></div>
<div class="a" style="left:0;top:230.4px;width:357px;height:23.5px;background:#fafafa"></div>
<div class="a" style="left:0;top:253.9px;width:357px;height:1px;background:#eeeeee"></div>
<div class="a" style="left:0;top:254.9px;width:357px;height:23.5px;background:#ffffff"></div>
<div class="a" style="left:0;top:278.4px;width:357px;height:1px;background:#eeeeee"></div>
<div class="a" style="left:0;top:279.4px;width:357px;height:23.5px;background:#fafafa"></div>
<div class="a" style="left:0;top:302.9px;width:357px;height:1px;background:#eeeeee"></div>
<div class="a" style="left:0;top:303.9px;width:357px;height:23.5px;background:#ffffff"></div>
<div class="a" style="left:0;top:327.4px;width:357px;height:1px;background:#eeeeee"></div>
<div class="a" style="left:0;top:328.4px;width:357px;height:23.5px;background:#fafafa"></div>
<div class="a" style="left:0;top:351.9px;width:357px;height:1px;background:#eeeeee"></div>
<div class="a" style="left:0;top:352.9px;width:357px;height:23.5px;background:#ffffff"></div>
<div class="a" style="left:0;top:376.3px;width:357px;height:1px;background:#eeeeee"></div>
<div class="a" style="left:0;top:377.3px;width:357px;height:23.5px;background:#fafafa"></div>
<div class="a" style="left:0;top:400.8px;width:357px;height:1px;background:#eeeeee"></div>
<div class="a" style="left:0;top:401.8px;width:357px;height:23.5px;background:#ffffff"></div>
<div class="a" style="left:0;top:425.3px;width:357px;height:1px;background:#eeeeee"></div>
<div class="a" style="left:0;top:426.3px;width:357px;height:23.5px;background:#fafafa"></div>
<div class="a" style="left:0;top:449.8px;width:357px;height:1px;background:#eeeeee"></div>
<div class="a" style="left:0;top:450.8px;width:357px;height:23.5px;background:#ffffff"></div>
<div class="a" style="left:0;top:474.3px;width:357px;height:1px;background:#eeeeee"></div>
<div class="a" style="left:0;top:475.3px;width:357px;height:23.5px;background:#fafafa"></div>
<div class="a" style="left:0;top:498.8px;width:357px;height:1px;background:#eeeeee"></div>
<div class="a" style="left:0;top:499.8px;width:357px;height:23.5px;background:#ffffff"></div>
<div class="a" style="left:0;top:523.3px;width:357px;height:1px;background:#eeeeee"></div>
<div class="a" style="left:0;top:524.3px;width:357px;height:23.5px;background:#fafafa"></div>
<div class="a" style="left:0;top:547.8px;width:357px;height:1px;background:#eeeeee"></div>
<div class="a" style="left:0;top:548.8px;width:357px;height:23.5px;background:#ffffff"></div>
<div class="a" style="left:0;top:572.3px;width:357px;height:1px;background:#eeeeee"></div>
<div class="a" style="left:0;top:573.3px;width:357px;height:23.5px;background:#fafafa"></div>
<div class="a" style="left:0;top:596.8px;width:357px;height:1px;background:#eeeeee"></div>
<div class="a" style="left:0;top:597.8px;width:357px;height:23.5px;background:#ffffff"></div>
<div class="a" style="left:0;top:621.2px;width:357px;height:1px;background:#eeeeee"></div>
<div class="a" style="left:0;top:622.2px;width:357px;height:23.5px;background:#fafafa"></div>
<div class="a" style="left:0;top:645.7px;width:357px;height:1px;background:#eeeeee"></div>
<div class="a" style="left:0;top:646.7px;width:357px;height:23.5px;background:#ffffff"></div>
<div class="a" style="left:0;top:670.2px;width:357px;height:1px;background:#eeeeee"></div>
<div class="a" style="left:0;top:671.2px;width:357px;height:23.5px;background:#fafafa"></div>
<div class="a" style="left:0;top:694.7px;width:357px;height:1px;background:#eeeeee"></div>
<div class="a" style="left:0;top:695.7px;width:357px;height:23.5px;background:#ffffff"></div>
<div class="a" style="left:0;top:719.2px;width:357px;height:1px;background:#eeeeee"></div>
<div class="a" style="left:0;top:720.2px;width:357px;height:23.5px;background:#fafafa"></div>
<div class="a" style="left:0;top:743.7px;width:357px;height:1px;background:#eeeeee"></div>
<div class="a" style="left:0;top:744.7px;width:357px;height:23.5px;background:#ffffff"></div>
<div class="a" style="left:0;top:768.2px;width:357px;height:1px;background:#eeeeee"></div>
<div class="a" style="left:0;top:769.2px;width:357px;height:23.5px;background:#fafafa"></div>
<div class="a" style="left:0;top:792.7px;width:357px;height:1px;background:#eeeeee"></div>
<div class="a" style="left:0;top:793.7px;width:357px;height:23.5px;background:#ffffff"></div>
<div class="a" style="left:0;top:817.2px;width:357px;height:1px;background:#eeeeee"></div>
<div class="a" style="left:0;top:818.2px;width:357px;height:23.5px;background:#fafafa"></div>
<div class="a" style="left:0;top:841.6px;width:357px;height:1px;background:#eeeeee"></div>
<div class="a" style="left:0;top:842.6px;width:357px;height:23.5px;background:#ffffff"></div>
<div class="a" style="left:0;top:866.1px;width:357px;height:1px;background:#eeeeee"></div>
<div class="a" style="left:0;top:867.1px;width:357px;height:23.5px;background:#fafafa"></div>
<div class="a" style="left:0;top:890.6px;width:357px;height:1px;background:#eeeeee"></div>
<div class="a" style="left:0;top:891.6px;width:357px;height:23.5px;background:#ffffff"></div>
<div class="a" style="left:0;top:915.1px;width:357px;height:1px;background:#eeeeee"></div>
<div class="a" style="left:0;top:916.1px;width:357px;height:23.5px;background:#fafafa"></div>
<div class="a" style="left:0;top:939.6px;width:357px;height:1px;background:#eeeeee"></div>
<div class="a" style="left:0;top:940.6px;width:357px;height:23.5px;background:#ffffff"></div>
<div class="a" style="left:0;top:964.1px;width:357px;height:1px;background:#eeeeee"></div>
<div class="a" style="left:0;top:965.1px;width:357px;height:23.5px;background:#fafafa"></div>
<div class="a" style="left:0;top:988.6px;width:357px;height:1px;background:#eeeeee"></div>
<div class="a" style="left:0;top:989.6px;width:357px;height:23.5px;background:#ffffff"></div>
<div class="a" style="left:0;top:1013.1px;width:357px;height:1px;background:#eeeeee"></div>
<div class="a" style="left:0;top:1014.1px;width:357px;height:23.5px;background:#fafafa"></div>
<div class="a" style="left:0;top:1037.6px;width:357px;height:1px;background:#eeeeee"></div>
<div class="a" style="left:217px;top:178px;width:1px;height:880px;background:#e6e6e6"></div>
<div class="a" style="left:340px;top:178px;width:1px;height:880px;background:#e6e6e6"></div>
<div class="a" style="left:357px;top:178px;width:1px;height:910px;background:#d6d6d6"></div>
<div class="t" style="left:-5px;top:186px;font-size:14px;color:#333">称</div>
<div class="a" style="left:32px;top:190px;width:0;height:0;border-left:6px solid transparent;border-right:6px solid transparent;border-bottom:6px solid #111"></div>
<div class="t" style="left:226px;top:186px;font-size:14px;color:#333">最新</div>
<div class="a" style="left:341px;top:180px;width:15px;height:24px;overflow:hidden"><div class="t" style="left:6px;top:6px;font-size:14px;color:#333">附</div></div>
<div class="t" style="left:20px;top:211px;font-size:14.5px;color:#222">模型视图</div>
<div class="t" style="left:39px;top:235px;font-size:14.5px;color:#222">摄像机</div>
<div class="t" style="left:20px;top:260px;font-size:14.5px;color:#222">模型历史记录</div>
<div class="t" style="left:62px;top:285px;font-size:14.5px;color:#333">基准坐标系 (0)</div>
<div class="t" style="left:62px;top:309px;font-size:14.5px;color:#d9534f">块 (1)</div>
<div class="t" style="left:62px;top:333px;font-size:14.5px;color:#222;font-weight:bold">基准平面 (2)</div>
<svg class="a" style="left:0;top:200px" width="260" height="160">
  <!-- model views icon -->
  <g fill="none" stroke="#2a9a7a" stroke-width="1.3"><circle cx="5" cy="17" r="7"/><path d="M-2,17 H12 M5,10 V24 M0,12 L10,22"/></g><path d="M6,24 L14,20" stroke="#e05030" stroke-width="1.5"/>
  <!-- check -->
  <path d="M0,41 L4,46 L12,36" stroke="#2a9a2a" stroke-width="3" fill="none"/>
  <path d="M18,38 L30,34 L33,44 L21,48 Z" fill="#f3f3ff" stroke="#d33" stroke-width="1.3"/><circle cx="26" cy="41" r="3.5" fill="#5a5ad0" stroke="#333"/>
  <!-- folder -->
  <path d="M-2,60 H6 L8,62 H14 V74 H-2 Z" fill="#f5c34a" stroke="#c89020"/><path d="M-2,66 H16 L13,74 H-2 Z" fill="#ffd86a" stroke="#c89020"/>
  <!-- tree dots -->
  <path d="M8,80 V140 M9,91 H20 M9,115 H20 M9,140 H20" stroke="#aaa" stroke-dasharray="1,2" fill="none"/>
  <!-- checkboxes -->
  <g><rect x="22.5" y="84.5" width="14" height="14" fill="#fff" stroke="#222" stroke-width="1.4"/><path d="M25,91 L29,96 L35,86" stroke="#2a9a2a" stroke-width="2.6" fill="none"/></g>
  <g><rect x="22.5" y="108.5" width="14" height="14" fill="#fff" stroke="#222" stroke-width="1.4"/><path d="M25,115 L29,120 L35,110" stroke="#2a9a2a" stroke-width="2.6" fill="none"/></g>
  <g><rect x="22.5" y="133.5" width="14" height="14" fill="#fff" stroke="#222" stroke-width="1.4"/><path d="M25,140 L29,145 L35,135" stroke="#2a9a2a" stroke-width="2.6" fill="none"/></g>
  <!-- csys icon -->
  <path d="M41,84 V96 L51,100 M41,96 L55,88 M44,86 L50,96" stroke="#444" stroke-width="1.2" fill="none"/><path d="M52,101 L55,103" stroke="#d33" stroke-width="1.2"/><path d="M40,84 L42,82" stroke="#33c" stroke-width="1.2"/>
  <!-- block -->
  <path d="M40,110 L47,107 L56,109 V119 L49,123 L40,120 Z" fill="#7f9ae6" stroke="#4a64c8"/><path d="M40,110 L49,113 L56,109 M49,113 V123" stroke="#c8d4fa" fill="none"/>
  <!-- plane -->
  <path d="M42,134 L48,137 V150 L42,146 Z M48,137 L55,135 V149 L48,150" fill="#f8f8f8" stroke="#555" stroke-width="1"/>
  <!-- col2 checks -->
  <path d="M226,91 L231,97 L240,86" stroke="#1e9a2e" stroke-width="3.2" fill="none"/>
  <path d="M226,115 L231,121 L240,110" stroke="#1e9a2e" stroke-width="3.2" fill="none"/>
  <path d="M226,140 L231,146 L240,135" stroke="#1e9a2e" stroke-width="3.2" fill="none"/>
</svg>
<!-- scrollbar -->
<div class="a" style="left:0;top:1058px;width:357px;height:19px;background:#f0f0f0"></div>
<div class="a" style="left:-2px;top:1058px;width:259px;height:18px;background:linear-gradient(#f4f4f4,#dadada);border:1px solid #a8a8a8;border-radius:2px"></div>
<div class="a" style="left:121px;top:1063px;width:8px;height:8px;border-left:1px solid #555;border-right:1px solid #555"></div><div class="a" style="left:125px;top:1063px;width:1px;height:8px;background:#555"></div>
<div class="a" style="left:343px;top:1063px;width:0;height:0;border-top:4px solid transparent;border-bottom:4px solid transparent;border-left:5px solid #222"></div>
<div class="a" style="left:0;top:1080px;width:358px;height:6px;background:#d0d0d0;border-top:1px solid #c0c0c0"></div>
<div class="t" style="left:-15px;top:1094px;font-size:15px;color:#2a6c95">相关性</div>
<svg class="a" style="left:334px;top:1093px" width="20" height="14"><path d="M3,2.5 L9,11.5 L15,2.5" stroke="#1f5f80" stroke-width="2.6" fill="none" stroke-linejoin="miter"/></svg>
<div class="a" style="left:0;top:1113px;width:358px;height:2px;background:#dedede"></div>
<div class="a" style="left:337px;top:1124px;width:4px;height:1px;background:#8a9ad8"></div><div class="a" style="left:347px;top:1124px;width:4px;height:1px;background:#6ab08a"></div>
<div class="a" style="left:369px;top:143px;width:1px;height:982px;background:#7a7a7a"></div>



<!-- ================= TAB ================= -->
<div class="a" style="left:370px;top:143px;width:163px;height:26px;background:#509bbc"></div>
<div class="a" style="left:370px;top:169px;width:1245px;height:3px;background:#5e99b2"></div>
<svg class="a" style="left:376px;top:146px" width="22" height="20"><path d="M4,5 L11,1 L17,4 L17,8 L12,10 L12,13 L17,11 L17,15 L10,19 L4,16 Z" fill="#1a5ad8" stroke="#0a3aa8" stroke-width="0.8"/><path d="M6,6 L11,3.5 L11,15 L6,13 Z" fill="#9ac0ff"/></svg>
<div class="t" style="left:401px;top:148px;font-size:16.4px;color:#eaf4f9">_model1.prt</div>
<svg class="a" style="left:493px;top:148px" width="36" height="18"><path d="M3,3 H10 L13,6 V15 H3 Z" fill="none" stroke="#fff" stroke-width="2"/><path d="M8,11 L14,5" stroke="#fff" stroke-width="2"/><path d="M23,5 L30,12 M30,5 L23,12" stroke="#b8d4e4" stroke-width="2"/></svg>

<!-- ================= DIALOG ================= -->
<div class="a" style="left:370px;top:169px;width:402px;height:660px;background:#efefef"></div>
<div class="a" style="left:370px;top:169px;width:402px;height:32px;background:#509bbc"></div>
<svg class="a" style="left:377px;top:177px" width="20" height="20"><g transform="translate(10,10)"><circle r="6" fill="none" stroke="#fff" stroke-width="3"/><g stroke="#fff" stroke-width="3"><path d="M0,-9 V-6 M0,6 V9 M-9,0 H-6 M6,0 H9 M-6.4,-6.4 L-4.2,-4.2 M4.2,4.2 L6.4,6.4 M-6.4,6.4 L-4.2,4.2 M4.2,-4.2 L6.4,-6.4"/></g></g></svg>
<div class="t" style="left:405px;top:179px;font-size:18px;color:#f4fafd">拔模</div>
<svg class="a" style="left:717px;top:176px" width="48" height="20"><path d="M11,5 A6,6 0 1 1 5,10" fill="none" stroke="#fff" stroke-width="2.2"/><path d="M3,5 L9,2 L8,8 Z" fill="#fff"/><path d="M30,4 L42,16 M42,4 L30,16" stroke="#fff" stroke-width="2.6"/></svg>

<!-- section 1 -->
<div class="sec" style="top:205px;height:53px"></div>
<div class="dd" style="left:388px;top:217px;width:366px;height:32px;border-color:#b4b4b4"></div>
<svg class="a" style="left:394px;top:223px" width="22" height="20"><path d="M2,8 L10,4 L19,8 L11,12 Z" fill="#fff" stroke="#333" stroke-width="1.3"/><path d="M2,8 V13 L11,17 L19,13 V8 M11,12 V17" fill="none" stroke="#333" stroke-width="1.3"/><path d="M5,8 L10,6 L16,8 L11,10 Z" fill="#a8c8f0"/></svg>
<div class="t" style="left:419px;top:225px;font-size:15px">面</div>
<div class="tri" style="left:738px;top:231px"></div>

<!-- section 2 脱模方向 -->
<div class="sec" style="top:262px;height:86px"></div>
<div class="sh" style="left:386px;top:271px">脱模方向</div>
<svg class="chev" style="left:743px;top:272px" width="16" height="12"><path d="M2,10 L8,3 L14,10" stroke="#2e7bb4" stroke-width="2.2" fill="none"/></svg>
<svg class="a" style="left:389px;top:310px" width="18" height="18"><path d="M2,9 L7,15 L16,3" stroke="#2a9a2a" stroke-width="3.2" fill="none"/></svg>
<div class="t" style="left:413px;top:312px;font-size:15px">指定矢量</div>
<div class="a" style="left:630px;top:305px;width:29px;height:29px;background:#fff;border:1px solid #bdbdbd"></div>
<div class="a" style="left:662px;top:305px;width:29px;height:29px;background:#fff;border:1px solid #bdbdbd"></div>
<div class="a" style="left:694px;top:300px;width:60px;height:39px;background:#fff;border:1px solid #bdbdbd"></div>
<div class="a" style="left:732px;top:301px;width:1px;height:37px;background:#d0d0d0"></div>
<div class="tri" style="left:739px;top:318px"></div>
<svg class="a" style="left:630px;top:300px" width="104" height="40">
  <path d="M7.3,13.2 L22.5,25.3" stroke="#222" stroke-width="1.5"/>
  <path d="M16.5,17.5 L20.5,13" stroke="#2020b0" stroke-width="2.4"/><path d="M23,10.5 L17.5,12 L21.5,16 Z" fill="#2020b0"/>
  <path d="M13,23 L9,27" stroke="#2020b0" stroke-width="2.4"/><path d="M6.8,29 L12.3,27.5 L8.3,23.5 Z" fill="#2020b0"/>
  <path d="M46.8,25 V14" stroke="#b02020" stroke-width="1.6"/><path d="M44.2,15 L46.8,10 L49.4,15 Z" fill="#c82020"/>
  <path d="M43,22 Q37,20 38.5,25 Q40,29 44,27" stroke="#f09030" stroke-width="2.2" fill="none"/>
  <g fill="#222"><rect x="46" y="27" width="2.2" height="2"/><rect x="49.5" y="27" width="2.2" height="2"/><rect x="53" y="27" width="2.2" height="2"/></g>
  <path d="M81.4,28 V13" stroke="#a01818" stroke-width="1.6"/><path d="M77.6,14 L81.4,6.5 L85.2,14 Z" fill="#e01818"/>
  <path d="M96.5,12 L86,21 L90,21.5 L81,32.5 L95,19.5 L91,19.5 Z" fill="#f2e040" stroke="#8a8a50" stroke-width="0.6"/>
</svg>

<!-- section 3 拔模参考 -->
<div class="sec" style="top:354px;height:160px"></div>
<div class="sh" style="left:386px;top:362px">拔模参考</div>
<svg class="chev" style="left:743px;top:363px" width="16" height="12"><path d="M2,10 L8,3 L14,10" stroke="#2e7bb4" stroke-width="2.2" fill="none"/></svg>
<div class="t" style="left:389px;top:399px;font-size:15px">拔模方法</div>
<div class="dd" style="left:581px;top:391px;width:173px;height:29px;border-color:#b4b4b4"><div class="t" style="left:6px;top:7px;font-size:15px">固定面和分型面</div><div class="tri" style="left:156px;top:12px"></div></div>
<svg class="a" style="left:389px;top:434px" width="18" height="18"><path d="M2,9 L7,15 L16,3" stroke="#2a9a2a" stroke-width="3.2" fill="none"/></svg>
<div class="t" style="left:413px;top:436px;font-size:15px">选择固定面 (1)</div>
<svg class="a" style="left:389px;top:475px" width="18" height="18"><path d="M2,9 L7,15 L16,3" stroke="#2a9a2a" stroke-width="3.2" fill="none"/></svg>
<div class="t" style="left:413px;top:477px;font-size:15px">选择分型面 (1)</div>
<div class="a" style="left:683px;top:429px;width:29px;height:29px;background:#fff;border:1px solid #bdbdbd"></div>
<div class="a" style="left:715px;top:425px;width:39px;height:38px;background:#fff;border:1px solid #bdbdbd"></div>
<div class="a" style="left:683px;top:471px;width:29px;height:29px;background:#fff;border:1px solid #bdbdbd"></div>
<div class="a" style="left:715px;top:466px;width:39px;height:38px;background:#fff;border:1px solid #bdbdbd"></div>
<svg class="a" style="left:683px;top:425px" width="72" height="80">
  <path d="M16.5,8 V19 M11,13.5 H22" stroke="#222" stroke-width="1.5"/><path d="M12,21 Q5,19 6.5,24 Q8,28 12,26" stroke="#f09030" stroke-width="2.2" fill="none"/><g fill="#222"><rect x="14" y="26" width="2" height="2"/><rect x="17.5" y="26" width="2" height="2"/><rect x="21" y="26" width="2" height="2"/></g>
  <path d="M16.5,50 V61 M11,55.5 H22" stroke="#222" stroke-width="1.5"/><path d="M12,63 Q5,61 6.5,66 Q8,70 12,68" stroke="#f09030" stroke-width="2.2" fill="none"/><g fill="#222"><rect x="14" y="68" width="2" height="2"/><rect x="17.5" y="68" width="2" height="2"/><rect x="21" y="68" width="2" height="2"/></g>
  <path d="M43,15 Q44,10 48,10 H58 Q62,10 63,15 M43,22 V26 H63 V22" fill="none" stroke="#444" stroke-width="1.4"/><path d="M39,15 H67" stroke="#e05a30" stroke-width="1.8"/><path d="M39,19.5 H67" stroke="#111" stroke-width="2.2"/>
  <path d="M43,57 Q44,52 48,52 H58 Q62,52 63,57 M43,64 V68 H63 V64" fill="none" stroke="#444" stroke-width="1.4"/><path d="M39,57 H67" stroke="#111" stroke-width="2.2"/><path d="M39,62 H67" stroke="#e05a30" stroke-width="1.8"/>
</svg>

<!-- section 4 要拔模的面 -->
<div class="sec" style="top:518px;height:184px"></div>
<div class="sh" style="left:386px;top:527px">要拔模的面</div>
<svg class="chev" style="left:743px;top:527px" width="16" height="12"><path d="M2,10 L8,3 L14,10" stroke="#2e7bb4" stroke-width="2.2" fill="none"/></svg>
<div class="a" style="left:388px;top:556px;width:366px;height:39px;background:#fedc70"></div>
<div class="a" style="left:712px;top:556px;width:1px;height:39px;background:#fbe6a8"></div>
<svg class="a" style="left:389px;top:566px" width="18" height="18"><path d="M2,9 L7,15 L16,3" stroke="#2a9a2a" stroke-width="3.2" fill="none"/></svg>
<div class="t" style="left:413px;top:568px;font-size:15px">选择面 (1)</div>
<svg class="a" style="left:721px;top:558px" width="30" height="34"><path d="M2,10 L14,3 L27,9 L15,16 Z" fill="#f4f4f4" stroke="#999" stroke-width="0.8"/><path d="M2,10 L15,16 V32 L2,25 Z" fill="#f37c0c" stroke="#c85a00" stroke-width="0.8"/><path d="M15,16 L27,9 V25 L15,32 Z" fill="#ddd" stroke="#999" stroke-width="0.8"/></svg>
<div class="t" style="left:389px;top:606px;font-size:15px">角度 1</div>
<div class="dd" style="left:581px;top:598px;width:173px;height:30px;border-color:#b4b4b4"></div>
<div class="a" style="left:587px;top:602px;width:18px;height:20px;background:#3d8ee0"></div>
<div class="t" style="left:587px;top:604px;font-size:15px;color:#fff">10</div>
<div class="t" style="left:682px;top:604px;font-size:11px;color:#333">°</div>
<div class="tri" style="left:739px;top:611px"></div>
<div class="t" style="left:389px;top:638px;font-size:15px">添加新集</div>
<div class="a" style="left:724px;top:631px;width:29px;height:29px;background:#5ea3cf"></div>
<svg class="a" style="left:724px;top:631px" width="29" height="29"><path d="M9,10 V18 M5,14 H13" stroke="#2040c0" stroke-width="2"/><circle cx="15.5" cy="17" r="3.5" fill="none" stroke="#c03030" stroke-width="1.4"/><path d="M15.5,10 V24 M8.5,17 H22.5" stroke="#c03030" stroke-width="1.5"/></svg>
<div class="a" style="left:388px;top:663px;width:366px;height:29px;background:#ececec;border:1px solid #dcdcdc"></div>
<div class="t" style="left:400px;top:670px;font-size:15px;color:#2e7bb4">列表</div>
<svg class="chev" style="left:731px;top:670px" width="16" height="12"><path d="M2,2 L8,9 L14,2" stroke="#2e7bb4" stroke-width="2.2" fill="none"/></svg>

<!-- section 5 设置 -->
<div class="sec" style="top:707px;height:28px"></div>
<div class="sh" style="left:386px;top:714px">设置</div>
<svg class="chev" style="left:743px;top:714px" width="16" height="12"><path d="M2,2 L8,10 L14,2" stroke="#2e7bb4" stroke-width="2.4" fill="none"/></svg>

<!-- preview -->
<div class="a" style="left:382px;top:748px;width:16px;height:16px;background:#fff;border:1px solid #9a9a9a"></div>
<svg class="a" style="left:382px;top:748px" width="16" height="16"><path d="M4,8 L7,12 L12,3" stroke="#3a4a8a" stroke-width="1.6" fill="none"/></svg>
<div class="t" style="left:404px;top:749px;font-size:15px">预览</div>
<div class="t" style="left:669px;top:749px;font-size:15px">显示结果</div>
<div class="a" style="left:731px;top:742px;width:29px;height:29px;background:#fff;border:1px solid #bdbdbd"></div>
<svg class="a" style="left:731px;top:742px" width="29" height="29"><circle cx="12" cy="12" r="6.5" fill="none" stroke="#444" stroke-width="1.6"/><path d="M17,17 L23,23" stroke="#444" stroke-width="2.6"/></svg>

<div class="btn" style="left:542px;top:786px;width:66px;height:31px"><span style="font-size:12px">&lt;</span> 确定 <span style="font-size:12px">&gt;</span></div>
<div class="btn" style="left:614px;top:786px;width:67px;height:31px">应用</div>
<div class="btn" style="left:686px;top:786px;width:67px;height:31px">取消</div>


<!-- ================= TOOLTIP ================= -->
<div class="a" style="left:1236px;top:889px;width:149px;height:36px;background:#f3f3f3;border:1px solid #e0e0e0"></div>
<svg class="a" style="left:1238px;top:892px" width="10" height="30"><g fill="#aaa"><circle cx="3" cy="4" r="1"/><circle cx="7" cy="4" r="1"/><circle cx="3" cy="9" r="1"/><circle cx="7" cy="9" r="1"/><circle cx="3" cy="14" r="1"/><circle cx="7" cy="14" r="1"/><circle cx="3" cy="19" r="1"/><circle cx="7" cy="19" r="1"/><circle cx="3" cy="24" r="1"/><circle cx="7" cy="24" r="1"/></g></svg>
<div class="t" style="left:1260px;top:899px;font-size:15px">角度 1</div>
<div class="a" style="left:1305px;top:893px;width:76px;height:28px;background:#fff;border:1px solid #b8b8b8"></div>
<div class="t" style="left:1312px;top:899px;font-size:15px">10</div>
<div class="tri" style="left:1366px;top:905px"></div>

<!-- ================= WATERMARK ================= -->
<svg class="a" style="left:0;top:0" width="1615" height="1125">
  <g fill="rgb(237,141,91)" opacity="0.71">
    <g transform="translate(0,585.5) skewX(-21) translate(0,-585.5)">
      <path d="M659,539.4 H682 V547.8 H670 V556.5 H680 V563.8 H670 V576.6 H686 V585.5 H659 Z"/>
      <path d="M687,552.8 H705 Q712,552.8 712,560 V585.5 H701.5 V562 H697.5 V585.5 H687 Z"/>
      <path d="M714,552.8 H735 V585.5 H714 V576 H725 V571 H714 Z M722,559.5 V565 H725 V559.5 Z" fill-rule="evenodd"/>
    </g>
    <path d="M740,540 L764.7,540 L760.9,549 L744.4,549 Z"/>
    <path d="M737.5,541.6 L742.3,541.6 L728,585 L723,585 Z"/>
    <path d="M749.7,585.3 L764.7,540 L773.7,540 L783.3,585.3 Z M759.3,579.5 L772.1,579.5 L768.4,556 Z" fill-rule="evenodd"/>
    <path d="M780,585.3 L787,540 L797,540 L788.5,585.3 Z"/>
    <path d="M792.5,564 L951.6,564 L946.5,585 L785,585 Z"/>
    <text x="797" y="558.5" font-family="Liberation Sans" font-weight="bold" font-size="25" stroke="rgb(237,141,91)" stroke-width="0.9" transform="skewX(-12)" transform-origin="797 558.5" textLength="158" lengthAdjust="spacingAndGlyphs">工程师论坛网</text>
  </g>
  <text x="792" y="582" font-family="Liberation Sans" font-weight="bold" font-style="italic" font-size="17" fill="#fff" fill-opacity="0.85" textLength="150" lengthAdjust="spacingAndGlyphs">www.EngCN.com</text>
</svg>

</body></html>
